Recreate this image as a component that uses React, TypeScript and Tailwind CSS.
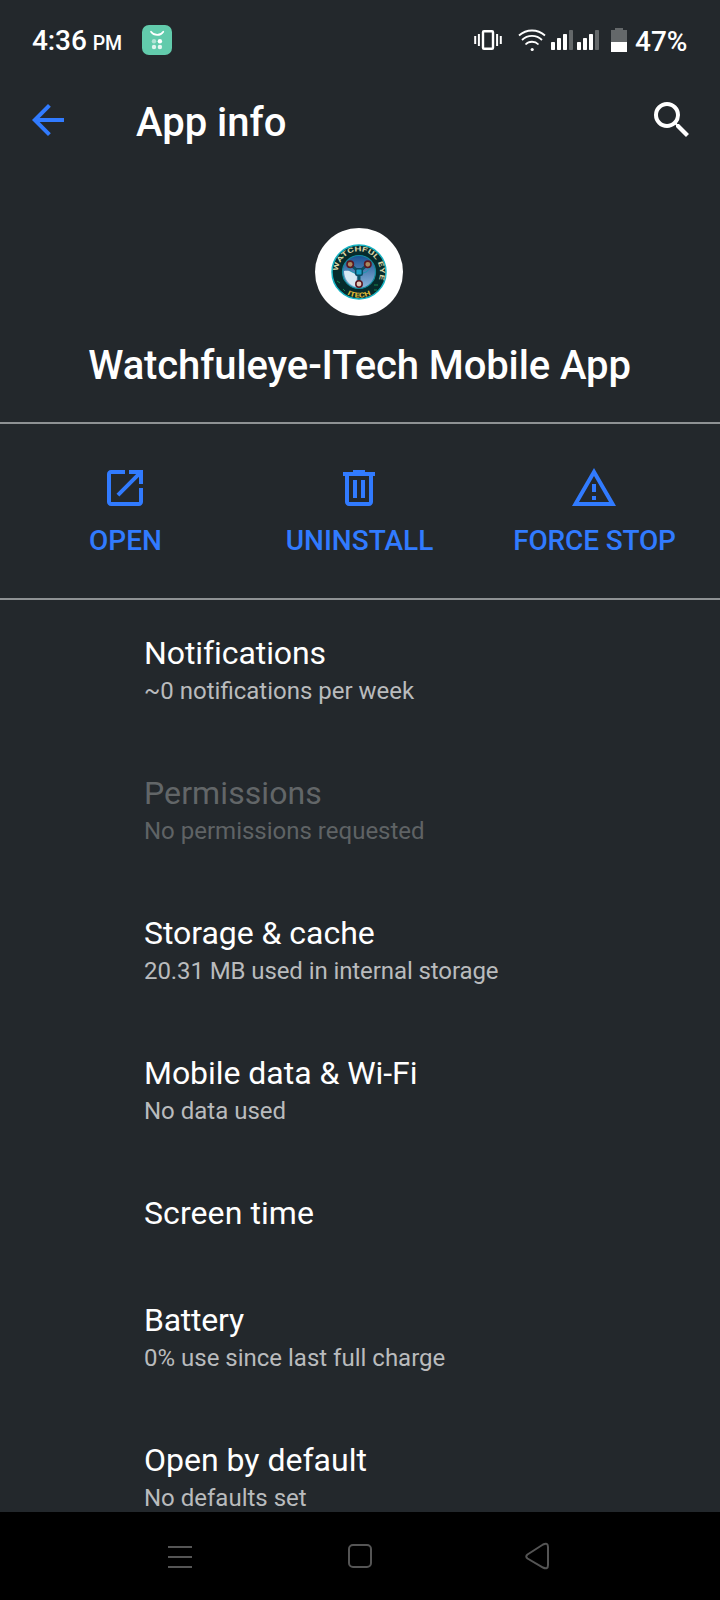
import React from "react";

type Row = { title: string; sub?: string; disabled?: boolean; titleClass?: string; subClass?: string };

const rows: Row[] = [
  { title: "Notifications", sub: "~0 notifications per week", titleClass: "tracking-[-0.08px]" },
  { title: "Permissions", sub: "No permissions requested", disabled: true, titleClass: "tracking-[0.1px]" },
  { title: "Storage & cache", sub: "20.31 MB used in internal storage", titleClass: "tracking-[-0.04px]", subClass: "tracking-[-0.09px]" },
  { title: "Mobile data & Wi-Fi", sub: "No data used", titleClass: "tracking-[-0.04px]" },
  { title: "Screen time", titleClass: "tracking-[0.08px]" },
  { title: "Battery", sub: "0% use since last full charge", titleClass: "tracking-[-0.25px]" },
  { title: "Open by default", sub: "No defaults set" },
];

function StatusBar() {
  return (
    <div className="flex h-20 shrink-0 items-center text-white">
      <div className="ml-8 flex w-[110px] items-baseline whitespace-nowrap pt-1 font-medium">
        <span className="text-[28px] leading-8 tracking-[-0.1px]">4:36</span>
        <span className="ml-1.5 text-[19.5px] leading-8 tracking-[-0.2px]">PM</span>
      </div>
      <svg className="h-[30px] w-[30px]" viewBox="0 0 30 30" fill="none">
        <rect width="30" height="30" rx="7" fill="#62cbac" />
        <path d="M9 6.700C12 11 18.500 11 21.300 6.700" stroke="#fff" strokeWidth="1.700" strokeLinecap="round" />
        <g fill="#fff">
          <circle cx="12" cy="16.200" r="2.200" opacity=".5" />
          <circle cx="17.900" cy="16.200" r="2.200" />
          <circle cx="12" cy="22" r="2.200" opacity=".8" />
          <circle cx="17.900" cy="22" r="2.200" opacity=".85" />
        </g>
      </svg>
      <svg className="ml-[302px] h-[30px] w-[154px]" viewBox="0 0 154 30" fill="none">
        <rect x="9" y="6.200" width="10" height="17.600" rx="1" stroke="#fff" strokeWidth="2.400" />
        <path d="M1.200 11v8M4.900 9v12M23.100 9v12M26.800 11v8" stroke="#fff" strokeWidth="2" />
        <g stroke="#fff" strokeWidth="1.800">
          <path d="M45 10.500C52.500 3.800 63.500 3.800 71 10.500M48 15C53.500 9.600 62.500 9.600 68 15M51.500 19.500C55 15.800 61 15.800 64.500 19.500" />
        </g>
        <circle cx="58.200" cy="24.500" r="1.600" fill="#fff" />
        <g fill="#fff">
          <rect x="77" y="17" width="4" height="8" rx=".7" />
          <rect x="83" y="13" width="4" height="12" rx=".7" />
          <rect x="89" y="9" width="4" height="16" rx=".7" />
          <rect x="103" y="17" width="4" height="8" rx=".7" />
          <rect x="109" y="13" width="4" height="12" rx=".7" />
          <rect x="115" y="9" width="4" height="16" rx=".7" />
          <rect x="137" y="17" width="16" height="10" />
        </g>
        <g fill="#64686a">
          <rect x="95" y="5" width="4" height="20" rx=".7" />
          <rect x="121" y="5" width="4" height="20" rx=".7" />
          <path d="M137 5h4V3h8v2h4v12h-16z" />
        </g>
      </svg>
      <span className="ml-[7px] pt-1 text-[28px] font-medium leading-8">47%</span>
    </div>
  );
}

function AppLogo() {
  return (
    <svg className="mr-0.5 h-[88px] w-[88px] shrink-0" viewBox="0 0 88 88" fill="none">
      <defs>
        <path id="logo-top" d="M24.200 51.200a21 21 0 1 1 39.600 0" />
        <path id="logo-bottom" d="M18.500 44a25.500 25.500 0 0 0 51 0" />
        <linearGradient id="logo-sky" x1="0" y1="0" x2="0" y2="1">
          <stop offset="0" stopColor="#184f91" />
          <stop offset="1" stopColor="#8db7dd" />
        </linearGradient>
      </defs>
      <circle cx="44" cy="44" r="44" fill="#fff" />
      <circle cx="44" cy="44" r="27" fill="#062b2c" stroke="#16b3c2" strokeWidth="1.500" />
      <circle cx="44" cy="44" r="16.500" fill="url(#logo-sky)" stroke="#138c9e" strokeWidth="1.200" />
      <path d="M29 43c5-1 11 1 13 6l-1 10c-7-2-12-8-12-16z" fill="#d7e8f3" />
      <path d="M35 36l9 8 9-8M44 44v12" stroke="#0b5264" strokeWidth="3" />
      <path d="M33 39c1 4 5 6 8 6M55 39c-1 4-5 6-8 6" stroke="#139aad" strokeWidth="1" />
      <rect x="40.700" y="40.700" width="6.600" height="6.600" rx="1.500" fill="#1a9fc4" stroke="#0b4a60" strokeWidth="1.500" />
      <g fill="#a98a60" stroke="#5b1822" strokeWidth="1.600">
        <circle cx="35.200" cy="36.300" r="3.200" />
        <circle cx="52.800" cy="36.300" r="3.200" />
        <circle cx="44" cy="56" r="3.200" fill="#e0c9b8" />
      </g>
      <path d="M22 53l3 2M59 57h4M27 29l2-1M59 62h3M28 61l2 2" stroke="#178a4c" strokeWidth="1" />
      <g fontFamily="Roboto, sans-serif" fontWeight="700" fontSize="6.800">
        <text fill="#d9d3a4">
          <textPath href="#logo-top" startOffset="8" textLength="72" lengthAdjust="spacingAndGlyphs">WATCHFUL EYE</textPath>
        </text>
        <text fill="#e2bd35" textAnchor="middle">
          <textPath href="#logo-bottom" startOffset="50%" textLength="25" lengthAdjust="spacingAndGlyphs">ITECH</textPath>
        </text>
      </g>
    </svg>
  );
}

const actions = [
  { label: "OPEN", labelClass: "pl-px", d: "M19 19H5V5h7V3H5c-1.110 0-2 .9-2 2v14c0 1.100.89 2 2 2h14c1.100 0 2-.9 2-2v-7h-2v7zM14 3v2h3.590l-9.830 9.830 1.410 1.410L19 6.410V10h2V3h-7z" },
  { label: "UNINSTALL", labelClass: "pl-px", d: "M15 4V3H9v1H4v2h1v13c0 1.100.9 2 2 2h10c1.100 0 2-.9 2-2V6h1V4h-5zm2 15H7V6h10v13zM9 8h2v9H9zm4 0h2v9h-2z" },
  { label: "FORCE STOP", labelClass: "pl-px tracking-[-0.15px]", d: "M12 5.990L19.530 19H4.470L12 5.990M12 2L1 21h22L12 2zm1 14h-2v2h2v-2zm0-6h-2v4h2v-4z" },
];

export default function App() {
  return (
    <div className="flex h-[1600px] w-[720px] flex-col overflow-hidden bg-[#23282c] font-[Roboto,sans-serif]">
      <StatusBar />
      <header className="flex h-20 shrink-0 items-center text-white">
        <svg className="ml-6 h-12 w-12 text-[#317bff]" viewBox="0 0 24 24" fill="currentColor">
          <path d="M20 11H7.830l5.590-5.590L12 4l-8 8 8 8 1.410-1.410L7.830 13H20v-2z" />
        </svg>
        <h1 className="ml-16 mt-1.5 text-[40px] font-medium leading-[48px]">App info</h1>
        <svg className="ml-auto mr-6 h-12 w-12" viewBox="0 0 24 24" fill="currentColor">
          <path d="M15.500 14h-.79l-.28-.27A6.471 6.471 0 0 0 16 9.500 6.500 6.500 0 1 0 9.500 16c1.610 0 3.090-.59 4.230-1.570l.27.28v.79l5 4.990L20.490 19l-4.990-5zm-6 0C7.010 14 5 11.990 5 9.500S7.010 5 9.500 5 14 7.010 14 9.500 11.990 14 9.500 14z" />
        </svg>
      </header>
      <section className="flex h-[264px] shrink-0 flex-col items-center border-b-2 border-[#8e9294] pt-[68px]">
        <AppLogo />
        <h2 className="mr-px mt-[26px] whitespace-nowrap text-[40px] font-medium leading-[48px] tracking-[-0.1px] text-white">Watchfuleye-ITech Mobile App</h2>
      </section>
      <section className="grid h-44 shrink-0 grid-cols-[250px_218px_252px] border-b-2 border-[#8e9294] pt-10 text-[#317bff]">
        {actions.map((action) => (
          <button key={action.label} className="flex flex-col items-center">
            <svg className="h-12 w-12" viewBox="0 0 24 24" fill="currentColor">
              <path d={action.d} />
            </svg>
            <span className={"mt-[13px] whitespace-nowrap text-[28px] font-medium leading-8 " + action.labelClass}>{action.label}</span>
          </button>
        ))}
      </section>
      <main className="min-h-0 flex-1 overflow-hidden pl-36">
        {rows.map((row) => (
          <div key={row.title} className={(row.sub ? "h-[140px]" : "h-[107px]") + " pt-8"}>
            <div className={"text-[32px] leading-[42px] [font-variant-ligatures:common-ligatures] " + (row.disabled ? "text-[#626668] " : "text-white ") + (row.titleClass ?? "")}>
              {row.title}
            </div>
            {row.sub && (
              <div className={"text-[24px] leading-[34px] " + (row.disabled ? "text-[#5f6365] " : "text-[#b9bbbd] ") + (row.subClass ?? "")}>{row.sub}</div>
            )}
          </div>
        ))}
      </main>
      <nav className="flex h-[88px] shrink-0 items-center bg-black">
        <svg className="h-[88px] w-[720px]" viewBox="0 0 720 88" fill="none" stroke="#555" strokeWidth="2">
          <path d="M168 35h24M168 45h24M168 55h24" />
          <rect x="349" y="33" width="22" height="22" rx="4" />
          <path d="M527.500 42.500L543 32.500Q548 30 548 35V53Q548 58 543 55.500L527.500 46.500Q525 44.500 527.500 42.500Z" />
        </svg>
      </nav>
    </div>
  );
}
